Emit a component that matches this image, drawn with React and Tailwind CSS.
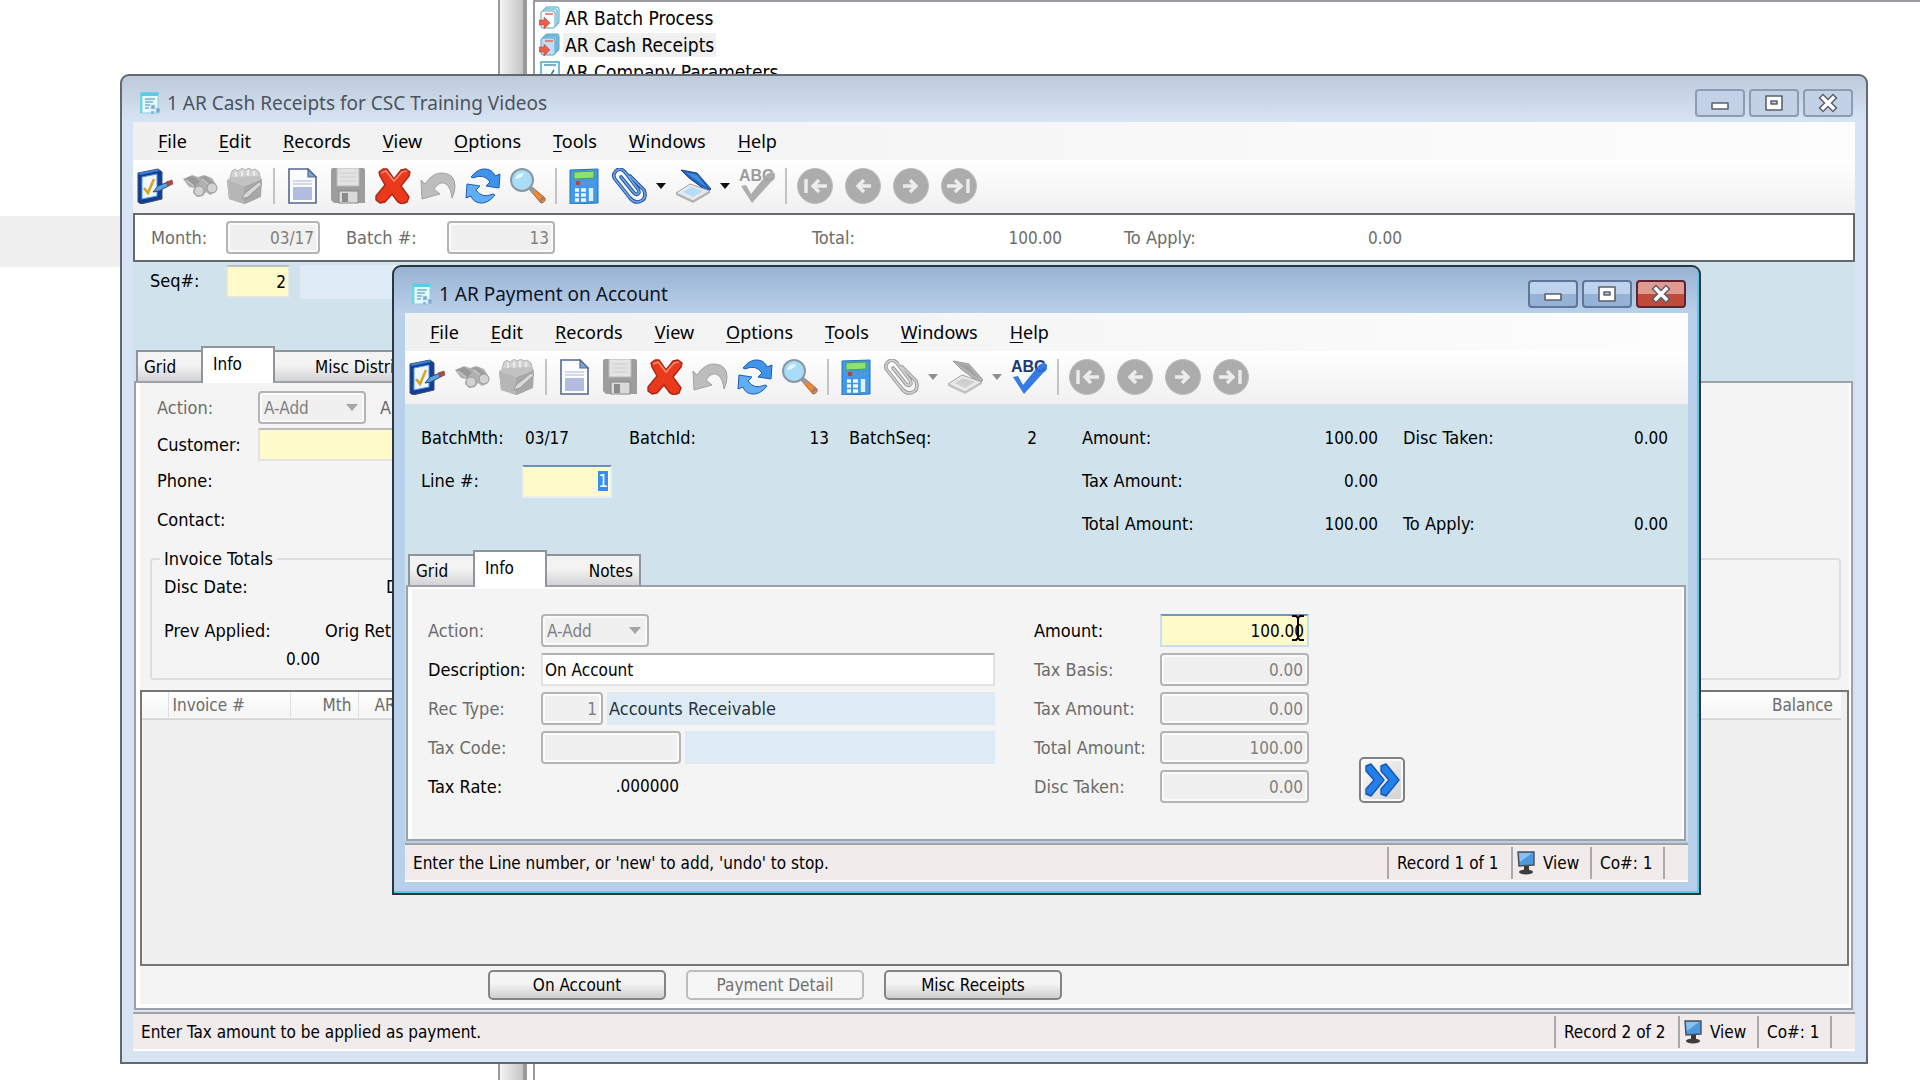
import { useEffect, useRef } from "react";

const MENUS = ["File", "Edit", "Records", "View", "Options", "Tools", "Windows", "Help"];

const FormIcon = () => (
  <svg viewBox="0 0 22 24" className="w-[22px] h-6 shrink-0" aria-hidden="true">
    <path d="M1 1h19v3H4v18H1z" fill="#6fd0e6" />
    <rect x="3" y="3" width="16" height="19" fill="#e9fbff" stroke="#86cfe4" />
    <path d="M2 2h17v3H2z" fill="#63c8e2" />
    <path d="M6 8h10M6 11h8M6 14h5M6 17h4" stroke="#6fb0d0" strokeWidth="1.4" />
    <path d="M12 14h4v4h-4zM17 17h4v5h-4zM12 20h3v3h-3z" fill="#7fa9cf" stroke="#b9d7ee" strokeWidth=".7" />
  </svg>
);

const BatchIcon = ({ active }) => (
  <svg viewBox="0 0 22 24" className="w-[22px] h-6 shrink-0" aria-hidden="true">
    <rect x="6" y="1" width="14" height="17" rx="2" fill={active ? "#8cc0e6" : "#d6f3fa"} stroke="#4ea5c4" />
    <rect x="4" y="3" width="14" height="17" rx="2" fill={active ? "#9ccbed" : "#e4f8fc"} stroke="#4ea5c4" />
    <rect x="2" y="5" width="14" height="17" rx="2" fill={active ? "#c3dcf4" : "#fff"} stroke="#4ea5c4" />
    <path d="M6 8h8" stroke="#e0705c" strokeWidth="1.6" />
    <path d="M0 14h5v-3l6 6-6 6v-4H0z" fill="#e8604c" stroke="#b9524a" strokeWidth=".6" />
  </svg>
);

const ParamIcon = () => (
  <svg viewBox="0 0 22 24" className="w-[22px] h-6 shrink-0" aria-hidden="true">
    <rect x="2" y="2" width="18" height="20" fill="#f2fdff" stroke="#4ea5c4" strokeWidth="1.5" />
    <path d="M5 5h12" stroke="#5b8fa8" strokeWidth="1.5" />
    <path d="M7 14l3 4 5-8" fill="none" stroke="#4c6d83" strokeWidth="1.5" />
  </svg>
);

const Svg = ({ children }) => (
  <svg viewBox="0 0 36 36" className="size-9" aria-hidden="true">
    {children}
  </svg>
);

const CheckFormIcon = () => (
  <Svg>
    <path d="M1 5L21 1l4 3v27L4 36l-3-2z" fill="#123f94" stroke="#3a4b66" />
    <path d="M1 5L21 1l1 2L3 7z" fill="#3c7fd6" />
    <path d="M5 9l15-3v22L5 31z" fill="#eef6ff" stroke="#4f95e4" />
    <path d="M7 20l4 5 6-14" fill="none" stroke="#d9a520" strokeWidth="2.6" />
    <path d="M16 24l5-6 10-4 2 3-11 6z" fill="#5aa2e2" stroke="#234a7c" />
    <path d="M29 14l6-2 1 4-5 2z" fill="#b9483c" stroke="#7c3a36" strokeWidth=".6" />
  </Svg>
);

const BinocularsIcon = () => (
  <Svg>
    <path d="M1 11l9-4 6 2 6-2 8 3 5 8-1 6-6 3-4-3-3 4-6 1-4-4 1-5-5-1z" fill="#b0b0b0" />
    <path d="M2 11l8-3 8 5-5 6z" fill="#999" />
    <path d="M18 9l6-1 9 8-7 2z" fill="#9e9e9e" />
    <circle cx="17" cy="23" r="5" fill="#d2d2d2" stroke="#999" />
    <circle cx="30" cy="20" r="5" fill="#d2d2d2" stroke="#999" />
    <path d="M4 12l8 6M20 11l6 5" stroke="#c9c9c9" strokeWidth="1.5" />
  </Svg>
);

const FileBoxIcon = () => (
  <Svg>
    <path d="M3 10l2-7 3-2 3 2 4-3 3 2 4-2 3 2 3-1 4 3 2 8z" fill="#d2d2d2" stroke="#b5b5b5" />
    <path d="M9 4v7M15 3v8M21 2v9M27 3v8" stroke="#ececec" strokeWidth="2" />
    <path d="M0 12l17 6 18-7-1 18-16 7L2 31z" fill="#a8a8a8" />
    <path d="M0 12l4-3 28-1 3 3-18 7z" fill="#c2c2c2" />
    <path d="M17 18v18L2 31 0 12z" fill="#b6b6b6" />
    <path d="M15 31l2-5 15-12 3 2-14 13z" fill="#d8d8d8" stroke="#8e8e8e" strokeWidth=".8" />
  </Svg>
);

const NewDocIcon = () => (
  <Svg>
    <path d="M4 1h19l8 8v26H4z" fill="#fafcff" stroke="#55668f" strokeWidth="1.6" />
    <path d="M23 1v8h8z" fill="#7ea5dd" stroke="#55668f" strokeWidth="1.2" />
    <path d="M8 13h19M8 16h19" stroke="#c3cbe6" strokeWidth="1.5" />
    <rect x="8" y="19" width="19" height="13" fill="#b3bbe0" />
  </Svg>
);

const SaveIcon = () => (
  <Svg>
    <path d="M1 2q0-2 2-2h30q2 0 2 2v33H4l-3-3z" fill="#9d9d9d" />
    <rect x="7" y="0" width="22" height="18" fill="#e3e3e3" stroke="#b9b9b9" />
    <path d="M10 5h16M10 9h16M10 13h16" stroke="#cfcfcf" strokeWidth="1.2" />
    <rect x="9" y="23" width="19" height="12" fill="#d9d9d9" stroke="#888" />
    <rect x="12" y="25" width="6" height="9" fill="#8a8a8a" />
  </Svg>
);

const DeleteIcon = () => (
  <Svg>
    <path
      d="M4 4l4-3h4l7 10 7-9 5-1 4 3-1 4-8 10 8 11-2 5-5 2-4-2-6-8-7 8-5 1-4-3 0-4 9-11L5 8z"
      fill="#ea3a1b"
      stroke="#a92617"
      strokeWidth="1.4"
      strokeLinejoin="round"
    />
    <path d="M6 5l5-2 8 10 8-9 5-1" fill="none" stroke="#f98a70" strokeWidth="1.6" />
  </Svg>
);

const UndoIcon = () => (
  <Svg>
    <path
      d="M1 12l4 4q8-12 18-11 12 1 12 13 0 6-3 12-1-10-6-14-6-4-12 5l6 5L2 31z"
      fill="#bdbdbd"
      stroke="#a2a2a2"
      strokeLinejoin="round"
    />
  </Svg>
);

const RefreshIcon = () => (
  <Svg>
    <path
      d="M6 9Q13 0 21 1q7 1 9 7l5-2-1 14-13-2 4-4q-6-9-17-4z"
      fill="#3f93ea"
      stroke="#1f5cae"
      strokeLinejoin="round"
    />
    <path
      d="M30 27q-7 9-15 8-7-1-9-7l-5 2 1-14 13 2-4 4q6 9 17 4z"
      fill="#62aef4"
      stroke="#1f5cae"
      strokeLinejoin="round"
    />
  </Svg>
);

const SearchIcon = () => (
  <Svg>
    <path d="M19 21l3-2 13 11q1 4-4 5z" fill="#f08a2c" stroke="#a6603a" />
    <path d="M19 21l3-2 4 4-3 3z" fill="#9a9aa0" />
    <path d="M30 33l4-4" stroke="#8b7f88" strokeWidth="2.4" />
    <circle cx="12" cy="12" r="11" fill="#a9dcf6" stroke="#8a98a4" strokeWidth="2" />
    <path d="M5 11q2-7 9-6-1 5-9 6z" fill="#e8f8ff" />
  </Svg>
);

const CalculatorIcon = () => (
  <Svg>
    <path d="M4 2l28-1v34l-28 1z" fill="#3f9bea" stroke="#2b6fb7" />
    <path d="M8 4l20-1v7l-20 1z" fill="#8fe36a" stroke="#4d9c58" />
    <path d="M10 15h4" stroke="#d33a2c" strokeWidth="4" />
    <path d="M16 15h3M21 15h3M26 15h2" stroke="#6f8fc6" strokeWidth="4" />
    <path d="M9 22h4M9 27h4M9 32h4M15 22h5M15 27h5M15 32h5" stroke="#f1f8ff" strokeWidth="3.4" />
    <path d="M25 20v13" stroke="#e1efff" strokeWidth="4.4" />
  </Svg>
);

const ClipIcon = ({ gray }) => (
  <Svg>
    <g fill="none" strokeLinecap="round" strokeLinejoin="round">
      <path
        d="M10 9l13 16q2 2 4 1t0-5L14 4Q9-1 5 3t-1 8l15 19q5 6 11 3t3-11L19 8"
        stroke={gray ? "#9a9a9a" : "#24539a"}
        strokeWidth="3.6"
      />
      <path
        d="M10 9l13 16q2 2 4 1t0-5L14 4Q9-1 5 3t-1 8l15 19q5 6 11 3t3-11L19 8"
        stroke={gray ? "#d4d4d4" : "#6fa6e8"}
        strokeWidth="1.6"
      />
    </g>
  </Svg>
);

const ScannerIcon = ({ gray }) => (
  <Svg>
    <path d="M6 2l16 3 14 16-3 3-19-14z" fill={gray ? "#b4b4b4" : "#1f64b8"} stroke={gray ? "#999" : "#1b4a8c"} />
    <path d="M10 4l12 3 10 13z" fill={gray ? "#a2a2a2" : "#3f8fde"} />
    <path d="M1 25l14-9 20 7-17 10z" fill="#e9e9e9" stroke="#a3a3a3" />
    <path d="M8 24l8-5 12 4-10 6z" fill={gray ? "#cfcfcf" : "#b5dcf8"} />
    <path d="M1 25v2l17 8 17-10v-2L18 33z" fill={gray ? "#c4c4c4" : "#b0b4b9"} />
  </Svg>
);

const SpellIcon = ({ gray }) => (
  <Svg>
    <text
      x="0"
      y="13"
      fontFamily="Liberation Sans, sans-serif"
      fontWeight="bold"
      fontSize="16"
      fill={gray ? "#9c9c9c" : "#1c3a78"}
    >
      ABC
    </text>
    <path
      d="M2 18l5-1 5 9L28 6q6-4 9 1-1 5-5 7L13 35z"
      fill={gray ? "#a6a6a6" : "#2470e0"}
      fillOpacity=".92"
    />
  </Svg>
);

const NavIcon = ({ d }) => (
  <Svg>
    <circle cx="18" cy="18" r="17.5" fill="#acacac" stroke="#bcbcbc" />
    <path d={d} fill="none" stroke="#ececec" strokeWidth="3.4" />
  </Svg>
);

const NAV = [
  { name: "First record", d: "M9 11v14M30 18H16M22 12l-6 6 6 6" },
  { name: "Previous record", d: "M26 18H13M19 12l-6 6 6 6" },
  { name: "Next record", d: "M10 18h13M17 12l6 6-6 6" },
  { name: "Last record", d: "M27 11v14M6 18h14M14 12l6 6-6 6" },
];

const Divider = ({ wide }) => <span className={`w-0.5 h-9 bg-[#c4c4c4] ${wide ? "mx-px" : ""}`} />;

const Tool = ({ name, children, disabled }) => (
  <button type="button" aria-label={name} disabled={disabled} className="size-9 shrink-0">
    {children}
  </button>
);

const DropArrow = ({ name, gray }) => (
  <button type="button" aria-label={name} disabled={gray} className="w-2.5 h-9 flex items-center">
    <svg viewBox="0 0 10 6" className="w-2.5 h-1.5" aria-hidden="true">
      <path d="M0 0h10L5 6z" fill={gray ? "#8f8f8f" : "#111"} />
    </svg>
  </button>
);

const Toolbar = ({ payment }) => (
  <div className="h-[53px] pl-1 pb-0.5 flex items-center gap-[9px] bg-linear-to-b from-white to-[#f0f0f0]">
    <Tool name="Close form"><CheckFormIcon /></Tool>
    <Tool name="Find" disabled><BinocularsIcon /></Tool>
    <Tool name="Files" disabled><FileBoxIcon /></Tool>
    <Divider wide />
    <Tool name="New"><NewDocIcon /></Tool>
    <Tool name="Save" disabled><SaveIcon /></Tool>
    <Tool name="Delete"><DeleteIcon /></Tool>
    <Tool name="Undo" disabled><UndoIcon /></Tool>
    <Tool name="Refresh"><RefreshIcon /></Tool>
    <Tool name="Search"><SearchIcon /></Tool>
    <Divider />
    <Tool name="Calculator"><CalculatorIcon /></Tool>
    <Tool name="Attachments" disabled={payment}><ClipIcon gray={payment} /></Tool>
    <DropArrow name="Attachment options" gray={payment} />
    <Tool name="Scan" disabled={payment}><ScannerIcon gray={payment} /></Tool>
    <DropArrow name="Scan options" gray={payment} />
    <Tool name="Spelling" disabled={!payment}><SpellIcon gray={!payment} /></Tool>
    <Divider wide />
    <div className="flex gap-3">
      {NAV.map((nav) => (
        <Tool key={nav.name} name={nav.name} disabled>
          <NavIcon d={nav.d} />
        </Tool>
      ))}
    </div>
  </div>
);

const CloseGlyph = () => (
  <g fill="none" strokeLinecap="square">
    <path d="M11 8l10 10M21 8L11 18" stroke="#5b606e" strokeWidth="6.4" />
    <path d="M11 8l10 10M21 8L11 18" stroke="#fff" strokeWidth="3.4" />
  </g>
);

const BoxGlyph = ({ d }) => (
  <path d={d} fill="#fff" fillRule="evenodd" stroke="#5b606e" strokeWidth="1.6" strokeLinejoin="round" />
);

const CAPTION = [
  { name: "Minimize", glyph: <BoxGlyph d="M8 13h16v6H8z" /> },
  { name: "Maximize", glyph: <BoxGlyph d="M8 6h16v14H8zM13 11h6v3h-6z" /> },
  { name: "Close", glyph: <CloseGlyph /> },
];

const CaptionButtons = ({ active }) => (
  <div className="flex gap-1">
    {CAPTION.map(({ name, glyph }) => {
      let look = "border-[#8d9bb3] bg-[#c3d1e6]";
      if (active) look = "border-[#5f7595] bg-linear-to-b from-[#bdd2ec] from-50% to-[#96b2d6] to-50%";
      if (active && name === "Close")
        look = "border-[#5c2430] bg-linear-to-b from-[#e09a90] from-50% to-[#c24a3a] to-50%";
      return (
        <button
          key={name}
          type="button"
          aria-label={name}
          className={`w-[50px] h-7 border-2 rounded-[4px] flex items-center justify-center ${look}`}
        >
          <svg viewBox="0 0 32 26" className="w-8 h-[26px] shrink-0" aria-hidden="true">
            {glyph}
          </svg>
        </button>
      );
    })}
  </div>
);

const MonitorIcon = () => (
  <svg viewBox="0 0 18 24" className="w-[18px] h-6" aria-hidden="true">
    <path d="M1 1l16 0v13l-15 1z" fill="#4d99de" stroke="#4a5058" strokeWidth="1.4" />
    <path d="M2 2h13L3 11z" fill="#86c2f4" />
    <path d="M7 15h5v4H7z" fill="#3a3a3a" />
    <ellipse cx="9" cy="21" rx="7" ry="2.5" fill="#3d3d3d" />
  </svg>
);

const StatusBar = ({ message, record }) => (
  <div className="mt-0.5 h-[39px] border-t-2 border-t-[#a3a3a6] border-b-2 border-b-white bg-[#f1ebeb] flex items-center text-[17px]">
    <p className="pl-2 flex-1 truncate">{message}</p>
    <span className="w-[124px] h-8 border-l-2 border-[#aaa] pl-2 flex items-center">{record}</span>
    <span className="w-[79px] h-8 border-l-2 border-[#aaa] pl-1 flex items-center gap-2">
      <MonitorIcon />
      View
    </span>
    <span className="w-[73px] h-8 border-l-2 border-[#aaa] pl-2 flex items-center">Co#: 1</span>
    <span className="w-[25px] h-8 border-l-2 border-[#aaa]" />
  </div>
);

const Window = ({ title, active, className, children }) => (
  <section
    aria-label={title}
    className={`absolute rounded-t-[9px] border-2 px-[11px] pb-[11px] ${
      active
        ? "border-[#2b3640] bg-[#b9d0ea] bg-linear-to-b from-[#98b3d2] to-[#b9d0ea] to-[46px] shadow-[inset_-2px_-2px_0_#52cdea]"
        : "border-[#65696f] bg-linear-to-b from-[#bdcad9] to-[#d7e4f3] to-[46px]"
    } ${className}`}
  >
    <header className="h-[46px] pt-2 pl-[6px] pr-0.5 flex items-center gap-[6px]">
      <FormIcon />
      <h1
        className={`flex-1 text-[19px] leading-6 font-['Noto_Sans',sans-serif] ${
          active ? "text-[#10151f]" : "text-[#4c535e]"
        }`}
      >
        {title}
      </h1>
      <CaptionButtons active={active} />
    </header>
    <nav className="h-[38px] pl-[9px] flex items-center bg-linear-to-r from-[#f0f0f0] to-[#fdfdfd] font-['Noto_Sans',sans-serif]">
      {MENUS.map((menu) => (
        <button key={menu} type="button" className="px-4">
          <span className="underline underline-offset-3">{menu[0]}</span>
          {menu.slice(1)}
        </button>
      ))}
    </nav>
    <Toolbar payment={active} />
    {children}
  </section>
);

const GRAY_BOX =
  "h-[33px] rounded-[4px] border-2 border-[#b4b4b4] bg-[#f0f0f0] shadow-[inset_0_0_0_2px_#fafafa] text-[17px] text-[#808080]";

const GrayInput = ({ id, value, className }) => (
  <input id={id} defaultValue={value} disabled className={`${GRAY_BOX} px-1 text-right ${className}`} />
);

const ActionSelect = ({ id }) => (
  <div className="relative w-[108px]">
    <select id={id} disabled className={`${GRAY_BOX} w-full appearance-none pl-1 opacity-100`}>
      <option>A-Add</option>
    </select>
    <svg viewBox="0 0 12 7" className="absolute right-2 top-[13px] w-3 h-[7px]" aria-hidden="true">
      <path d="M0 0h12L6 7z" fill="#a5a5a5" />
    </svg>
  </div>
);

const TAB = "h-[31px] border-2 border-b-0 border-[#8e959c] bg-linear-to-b from-[#f3f3f3] from-45% to-[#d3d3d5]";

const Tabs = ({ last, className }) => (
  <div role="tablist" className="h-[35px] pl-[3px] flex items-end text-[17px]">
    <button type="button" role="tab" className={`${TAB} w-[65px] border-r-0 pl-1.5 text-left`}>
      Grid
    </button>
    <button
      type="button"
      role="tab"
      aria-selected="true"
      className="relative z-10 -mb-0.5 h-[37px] w-[74px] border-2 border-b-0 border-[#8e959c] bg-white pl-2.5 pb-1 text-left"
    >
      Info
    </button>
    <button type="button" role="tab" className={`${TAB} border-l-0 ${className}`}>
      {last}
    </button>
  </div>
);

const Pair = ({ label, value, className }) => (
  <div className={`flex justify-between ${className || ""}`}>
    <span>{label}</span>
    <span className="text-[17px]">{value}</span>
  </div>
);

const CashReceipts = () => (
  <Window title="1 AR Cash Receipts for CSC Training Videos" className="left-[120px] right-[52px] top-[74px]">
    <div className="h-[49px] border-2 border-[#66696d] bg-white pl-4 flex items-center text-[#6c6c6c]">
      <label htmlFor="month" className="w-[75px]">Month:</label>
      <GrayInput id="month" value="03/17" className="w-[94px]" />
      <label htmlFor="batch" className="w-[101px] ml-[26px]">Batch #:</label>
      <GrayInput id="batch" value="13" className="w-[108px]" />
      <Pair label="Total:" value="100.00" className="ml-[257px] w-[250px]" />
      <Pair label="To Apply:" value="0.00" className="ml-[62px] w-[278px]" />
    </div>
    <div className="bg-[#d0e3ec]">
      <div className="h-[84px] pt-[3px] pl-[17px] flex items-start">
        <label htmlFor="seq" className="w-[76px] leading-8">Seq#:</label>
        <input
          id="seq"
          defaultValue="2"
          className="w-[64px] h-[33px] border-2 border-[#e3e6df] border-t-[#b9bfc4] bg-[#fffac9] px-0.5 text-right text-[17px]"
        />
        <span className="ml-2.5 h-[34px] w-[500px] bg-[#deebf4]" />
      </div>
      <Tabs last="Misc Distri" className="w-[170px] pl-10 text-left" />
      <div className="ml-px mr-0.5 border-2 border-[#9ea2a8] bg-white pl-1 pr-0.5 pb-1">
        <div className="bg-[#f4f4f4]">
          <div className="pt-2 pl-[17px]">
            <div className="flex items-center text-[#6c6c6c]">
              <label htmlFor="receipt-action" className="w-[101px]">Action:</label>
              <ActionSelect id="receipt-action" />
              <span className="ml-[14px]">A</span>
            </div>
            <div className="mt-1 flex items-center">
              <label htmlFor="customer" className="w-[101px]">Customer:</label>
              <input
                id="customer"
                className="w-[180px] h-[33px] border-2 border-[#e3e3e3] border-t-[#bdbdbd] bg-[#fffac9]"
              />
            </div>
            <p className="leading-[39px]">Phone:</p>
            <p className="leading-[39px]">Contact:</p>
          </div>
          <fieldset className="ml-[10px] mr-2 mt-2.5 h-[131px] rounded-[4px] border-2 border-[#dedede] px-3">
            <legend className="leading-5 px-1 -ml-1">Invoice Totals</legend>
            <div className="mt-1 leading-7 flex">
              <span className="w-[222px]">Disc Date:</span>
              <span>D</span>
            </div>
            <div className="mt-4 leading-7 flex">
              <span className="w-[161px]">Prev Applied:</span>
              <span>Orig Ret</span>
            </div>
            <p className="w-[156px] leading-7 text-right text-[17px]">0.00</p>
          </fieldset>
          <div className="mt-2.5 h-[276px] border-2 border-[#777] bg-[#f0f0f0] pr-1.5">
            <table className="w-full table-fixed text-[17px] text-[#6c6c6c]">
              <thead>
                <tr className="h-[27px] border-b-2 border-[#d8d8d8] bg-linear-to-b from-white to-[#f4f4f4]">
                  <td className="w-[26px] border-r border-[#e0e0e0]" />
                  <th className="w-[122px] border-r border-[#e0e0e0] pl-1 text-left font-normal">Invoice #</th>
                  <th className="w-[68px] border-r border-[#e0e0e0] pr-1.5 text-right font-normal">Mth</th>
                  <th className="pl-4 text-left font-normal">AR</th>
                  <th className="w-[140px] pr-2 text-right font-normal">Balance</th>
                </tr>
              </thead>
            </table>
          </div>
          <div className="mt-1 pb-1 pl-[348px] flex gap-5">
            {["On Account", "Payment Detail", "Misc Receipts"].map((name) => (
              <button
                key={name}
                type="button"
                disabled={name === "Payment Detail"}
                className="w-[178px] h-[30px] rounded-[5px] border-2 border-[#848484] bg-linear-to-b from-[#f4f4f4] from-45% to-[#cfcfcf] text-[17px] leading-5 disabled:border-[#bdbdbd] disabled:bg-none disabled:bg-[#f6f6f6] disabled:text-[#707070]"
              >
                {name}
              </button>
            ))}
          </div>
        </div>
      </div>
    </div>
    <StatusBar message="Enter Tax amount to be applied as payment." record="Record 2 of 2" />
  </Window>
);

const TOTALS = [
  { id: "tax-basis", label: "Tax Basis:", value: "0.00" },
  { id: "tax-amount", label: "Tax Amount:", value: "0.00" },
  { id: "total-amount", label: "Total Amount:", value: "100.00" },
  { id: "disc-taken", label: "Disc Taken:", value: "0.00" },
];

const PaymentOnAccount = () => {
  const lineRef = useRef(null);

  useEffect(() => {
    lineRef.current.focus();
    lineRef.current.select();
  }, []);

  return (
    <Window title="1 AR Payment on Account" active className="left-[392px] right-[219px] top-[265px]">
      <div className="bg-[#d0e3ec]">
        <div className="h-[146px] pt-[17px] pl-4 grid grid-cols-[188px_200px_188px_321px_270px] auto-rows-[34px] gap-x-5 gap-y-[9px] items-center content-start">
          <div className="flex">
            <span className="w-[104px]">BatchMth:</span>
            <span className="text-[17px]">03/17</span>
          </div>
          <Pair label="BatchId:" value="13" />
          <Pair label="BatchSeq:" value="2" />
          <Pair label="Amount:" value="100.00" className="pl-[25px]" />
          <Pair label="Disc Taken:" value="0.00" className="pl-[5px]" />
          <div className="flex items-center col-span-3">
            <label htmlFor="line" className="w-[101px]">Line #:</label>
            <input
              id="line"
              ref={lineRef}
              defaultValue="1"
              className="w-[90px] h-[33px] border-2 border-[#e9f0ee] border-t-[#6a8fb8] bg-[#fffac9] px-0.5 text-right text-[17px] outline-none selection:bg-[#3390f0] selection:text-white"
            />
          </div>
          <Pair label="Tax Amount:" value="0.00" className="pl-[25px]" />
          <Pair label="Total Amount:" value="100.00" className="col-start-4 pl-[25px]" />
          <Pair label="To Apply:" value="0.00" className="pl-[5px]" />
        </div>
        <Tabs last="Notes" className="w-[94px] border-r-2 pr-1.5 text-right" />
        <div className="ml-px mr-0.5 border-2 border-[#9ea2a8] bg-white pl-1 pt-0.5 pr-0.5">
          <div className="bg-[#f4f4f4] pt-[25px] pb-9 pl-4 flex items-end">
            <div className="w-[567px] grid gap-1.5">
              <div className="flex items-center text-[#6c6c6c]">
                <label htmlFor="line-action" className="w-[113px]">Action:</label>
                <ActionSelect id="line-action" />
              </div>
              <div className="flex items-center">
                <label htmlFor="description" className="w-[113px]">Description:</label>
                <input
                  id="description"
                  defaultValue="On Account"
                  className="flex-1 h-[33px] border-2 border-[#e2e2e2] border-t-[#b0b0b0] bg-white px-0.5 text-[17px]"
                />
              </div>
              <div className="flex items-center">
                <label htmlFor="rec-type" className="w-[113px] text-[#6c6c6c]">Rec Type:</label>
                <GrayInput id="rec-type" value="1" className="w-[62px]" />
                <span className="ml-1 flex-1 bg-[#dfebf4] pl-0.5 leading-[33px] text-[#27333d]">Accounts Receivable</span>
              </div>
              <div className="flex items-center">
                <label htmlFor="tax-code" className="w-[113px] text-[#6c6c6c]">Tax Code:</label>
                <GrayInput id="tax-code" value="" className="w-[140px]" />
                <span className="ml-1 h-[33px] flex-1 bg-[#dfebf4]" />
              </div>
              <Pair label="Tax Rate:" value=".000000" className="w-[251px] leading-[33px]" />
            </div>
            <div className="ml-[39px] grid gap-1.5">
              <div className="relative flex items-center">
                <label htmlFor="amount" className="w-[126px]">Amount:</label>
                <input
                  id="amount"
                  defaultValue="100.00"
                  className="w-[149px] h-[33px] border-2 border-[#c9dff0] border-t-[#6699c8] bg-[#fffac9] px-[3px] text-right text-[17px]"
                />
                {/* text cursor */}
                <svg viewBox="0 0 12 28" className="absolute right-[5px] top-0 w-3 h-7" aria-hidden="true">
                  <path d="M0 2h4l2 2 2-2h4M0 26h4l2-2 2 2h4M6 3v22" fill="none" stroke="#000" strokeWidth="2" />
                </svg>
              </div>
              {TOTALS.map(({ id, label, value }) => (
                <div key={id} className="flex items-center">
                  <label htmlFor={id} className="w-[126px] text-[#6c6c6c]">{label}</label>
                  <GrayInput id={id} value={value} className="w-[149px]" />
                </div>
              ))}
            </div>
            <button
              type="button"
              aria-label="More"
              className="ml-[50px] size-[46px] rounded-[5px] border-2 border-[#808080] bg-linear-to-br from-white to-[#cfcfd2] shadow-[inset_0_0_0_2px_#fafafa] flex items-center justify-center"
            >
              <svg viewBox="0 0 36 34" className="w-9 h-[34px]" aria-hidden="true">
                <g fill="#2180ea" stroke="#1a55ae" strokeWidth="1.4" strokeLinejoin="round">
                  <path d="M2 3l5-2 13 16L7 33l-5-2v-5l8-9-8-9z" />
                  <path d="M17 3l5-2 13 16-13 16-5-2v-5l8-9-8-9z" />
                </g>
              </svg>
            </button>
          </div>
        </div>
      </div>
      <StatusBar message="Enter the Line number, or 'new' to add, 'undo' to stop." record="Record 1 of 1" />
    </Window>
  );
};

export default function App() {
  return (
    <main className="relative min-h-screen overflow-hidden bg-white text-black text-[18px] leading-6 font-['DejaVu_Sans_Condensed','DejaVu_Sans',sans-serif]">
      <div className="flex h-screen">
        <div className="w-[498px] pt-[216px]">
          <div className="h-[51px] bg-[#f0f0f0]" />
        </div>
        <div className="w-[27px] border-x-2 border-[#9a9a9e] bg-linear-to-r from-[#f4f4f4] to-[#c4c4c4]" />
        <div className="flex-1 border-l-2 border-[#9a9a9e] pl-1.5">
          <ul className="h-full border-l-2 border-t-2 border-[#9a9aa2] pl-1 pt-0.5 text-[19px]">
            <li className="h-[27px] flex items-center">
              <BatchIcon />
              <span className="ml-0.5 px-0.5">AR Batch Process</span>
            </li>
            <li className="h-[27px] flex items-center">
              <BatchIcon active />
              <span className="ml-0.5 px-0.5 bg-[#f0f0f0]">AR Cash Receipts</span>
            </li>
            <li className="h-[27px] flex items-center">
              <ParamIcon />
              <span className="ml-0.5 px-0.5">AR Company Parameters</span>
            </li>
          </ul>
        </div>
      </div>
      <CashReceipts />
      <PaymentOnAccount />
    </main>
  );
}
